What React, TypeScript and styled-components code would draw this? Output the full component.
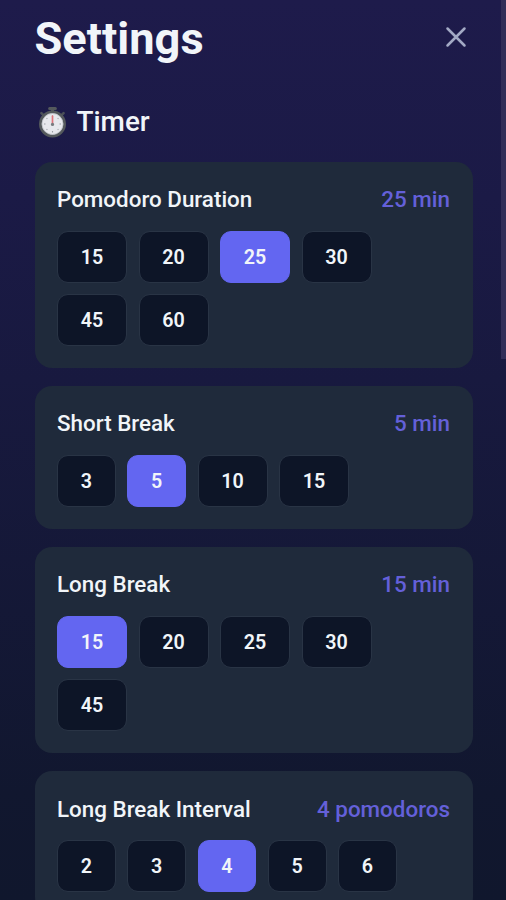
import React, { useState } from 'react';
import styled, { createGlobalStyle } from 'styled-components';

const GlobalStyle = createGlobalStyle`
  *, *::before, *::after { box-sizing: border-box; }
  html, body { margin: 0; height: 100%; overflow: hidden; }
  body { font-family: Roboto, "Liberation Sans", sans-serif; color: #f1f5f9; background: #0f172a; }
  button { font: inherit; color: inherit; cursor: pointer; }
`;

const Screen = styled.main`
  position: relative;
  height: 900px;
  overflow: hidden;
  padding: 11px 33.5px 0 34.5px;
  background: linear-gradient(180deg, #1e1b4b 0%, #1b1a46 22%, #11172f 88%, #10172d 100%);
`;

const Header = styled.header`
  display: flex;
  align-items: center;
  justify-content: space-between;
  height: 53px;
`;

const Title = styled.h1`
  margin: 2px 0 0;
  font-size: 45.2px;
  font-weight: 700;
  line-height: 53px;
`;

const CloseButton = styled.button`
  display: flex;
  padding: 0;
  margin: 0 6px 2px 0;
  border: 0;
  background: none;
  color: #a3aac5;
`;

const SectionTitle = styled.h2`
  display: flex;
  align-items: center;
  gap: 9px;
  height: 34px;
  margin: 40.5px 0 23.2px;
  padding-left: 2px;
  font-size: 27.9px;
  font-weight: 500;
  line-height: 34px;
`;

const CardList = styled.div`
  display: flex;
  flex-direction: column;
  gap: 18px;
`;

const Card = styled.section`
  padding: 22.4px 22.5px 22px;
  border-radius: 17px;
  background: #1f2a3b;
`;

const CardHeader = styled.div`
  display: flex;
  align-items: center;
  justify-content: space-between;
  height: 30px;
  margin-bottom: 16.6px;
  font-size: 22.4px;
  font-weight: 500;
  line-height: 30px;
  white-space: nowrap;
`;

const CurrentValue = styled.span`
  color: #6460d9;
`;

const Options = styled.div`
  display: flex;
  flex-wrap: wrap;
  gap: 11.3px 11.5px;
`;

const Option = styled.button<{ $active: boolean }>`
  height: 52px;
  padding: 2px 22.75px 0;
  border: 1px solid ${({ $active }) => ($active ? '#6366f1' : '#293445')};
  border-radius: 11px;
  background: ${({ $active }) => ($active ? '#6366f1' : '#0d1527')};
  font-size: 19.7px;
  font-weight: 600;
  line-height: 24px;
`;

const ScrollThumb = styled.div`
  position: absolute;
  top: 0;
  right: 0;
  width: 5px;
  height: 359px;
  background: #312e58;
`;

function CloseIcon() {
  return (
    <svg width="22" height="22" viewBox="0 0 22 22" fill="none" stroke="currentColor" strokeWidth="2.5" strokeLinecap="round">
      <path d="M2.5 2.5 19.5 19.5M19.5 2.5 2.5 19.5" />
    </svg>
  );
}

function StopwatchIcon() {
  return (
    <svg width="31" height="32" viewBox="0 0 31 32" fill="none">
      <path d="M12.6 2.6h5.8M15.5 3v4" stroke="#54595c" strokeWidth="3" strokeLinecap="round" />
      <path d="m4.4 7.1 2.8 2.8M26.6 7.1l-2.8 2.8" stroke="#4b5058" strokeWidth="2.6" strokeLinecap="round" />
      <circle cx="15.5" cy="18" r="12.1" fill="#e7e8ed" stroke="#54595c" strokeWidth="2.8" />
      <circle cx="15.5" cy="18" r="10.5" stroke="#b8bbc1" strokeWidth=".7" />
      <path d="M15.5 9.6v1.5M15.5 25v1.5M7 18h1.5M22.5 18H24M9.6 12.1l.7.7M21.4 12.1l-.7.7M9.6 23.9l.7-.7M21.4 23.9l-.7-.7" stroke="#9a9da3" strokeWidth="1.1" />
      <path d="M15.5 17.5V10" stroke="#e0747b" strokeWidth="1.7" strokeLinecap="round" />
      <circle cx="15.5" cy="18.4" r="1.6" fill="#777b80" />
    </svg>
  );
}

interface SettingProps {
  label: string;
  unit: string;
  options: number[];
  initial: number;
}

function SettingCard({ label, unit, options, initial }: SettingProps) {
  const [value, setValue] = useState(initial);
  return (
    <Card>
      <CardHeader>
        <span>{label}</span>
        <CurrentValue>{`${value} ${unit}`}</CurrentValue>
      </CardHeader>
      <Options>
        {options.map((n) => (
          <Option key={n} $active={n === value} onClick={() => setValue(n)}>
            {n}
          </Option>
        ))}
      </Options>
    </Card>
  );
}

const settings: SettingProps[] = [
  { label: 'Pomodoro Duration', unit: 'min', options: [15, 20, 25, 30, 45, 60], initial: 25 },
  { label: 'Short Break', unit: 'min', options: [3, 5, 10, 15], initial: 5 },
  { label: 'Long Break', unit: 'min', options: [15, 20, 25, 30, 45], initial: 15 },
  { label: 'Long Break Interval', unit: 'pomodoros', options: [2, 3, 4, 5, 6], initial: 4 },
];

export default function App() {
  return (
    <>
      <GlobalStyle />
      <Screen>
        <Header>
          <Title>Settings</Title>
          <CloseButton aria-label="Close">
            <CloseIcon />
          </CloseButton>
        </Header>
        <SectionTitle>
          <StopwatchIcon />
          <span>Timer</span>
        </SectionTitle>
        <CardList>
          {settings.map((s) => (
            <SettingCard key={s.label} {...s} />
          ))}
        </CardList>
        <ScrollThumb />
      </Screen>
    </>
  );
}
